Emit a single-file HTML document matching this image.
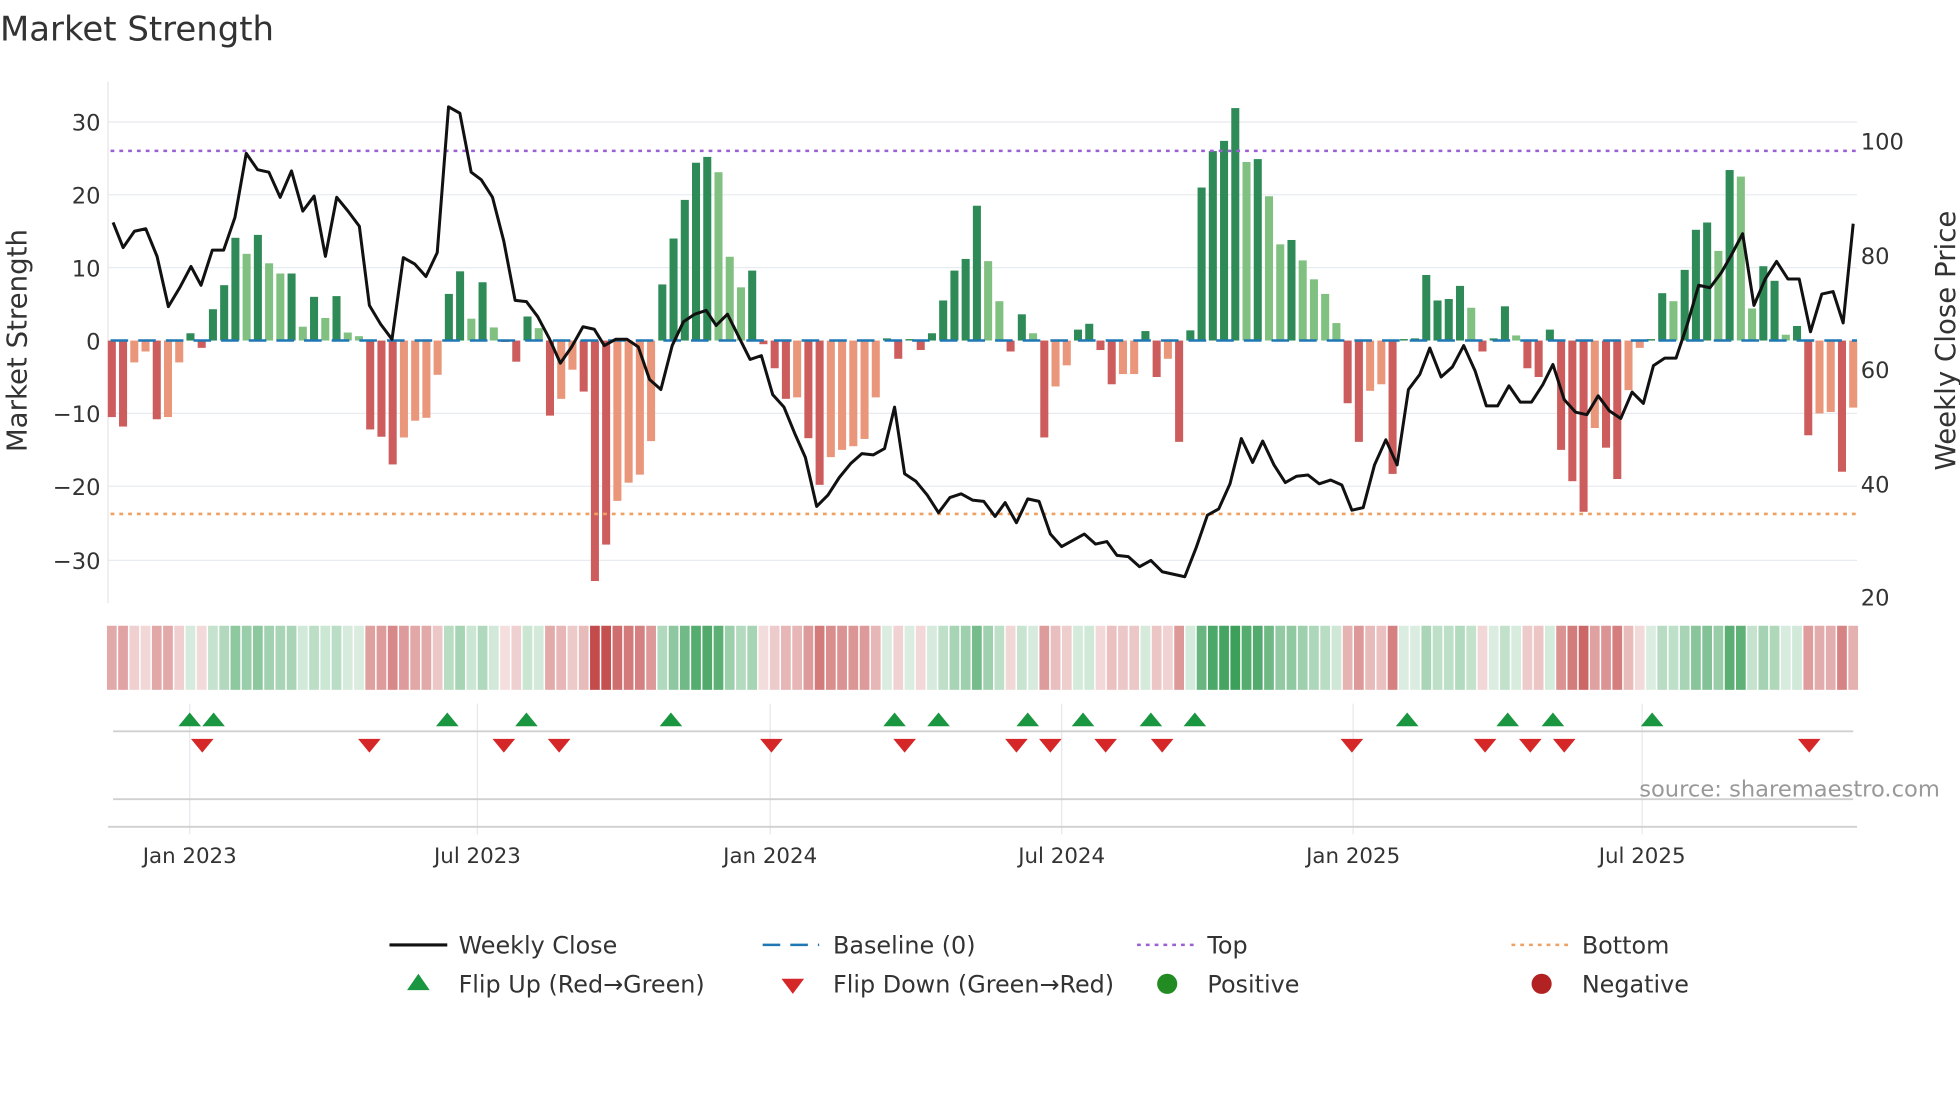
<!DOCTYPE html>
<html><head><meta charset="utf-8"><style>
html,body{margin:0;padding:0;background:#fff;overflow:hidden}
svg{display:block}
text{font-family:"DejaVu Sans","Liberation Sans",sans-serif}
</style></head><body>
<svg id="s" width="1960" height="1102" viewBox="0 0 1560 877" xmlns="http://www.w3.org/2000/svg">
<rect width="1560" height="877" fill="#fff"/>
<text x="0" y="32" font-size="27" fill="#333">Market Strength</text>
<g id="grid" stroke="#e8ebf0" stroke-width="1">
<line x1="86" x2="1478" y1="97" y2="97"/><line x1="86" x2="1478" y1="155" y2="155"/><line x1="86" x2="1478" y1="213" y2="213"/>
<line x1="86" x2="1478" y1="329" y2="329"/><line x1="86" x2="1478" y1="387" y2="387"/><line x1="86" x2="1478" y1="446" y2="446"/>
</g>
<line x1="86" x2="86" y1="65" y2="480" stroke="#e6e6e6"/>
<g font-size="18" fill="#333" text-anchor="end">
<text x="80" y="104">30</text><text x="80" y="162">20</text><text x="80" y="220">10</text><text x="80" y="278">0</text>
<text x="80" y="336">−10</text><text x="80" y="394">−20</text><text x="80" y="453">−30</text>
</g>
<g font-size="18" fill="#333">
<text x="1481" y="119">100</text><text x="1481" y="210">80</text><text x="1481" y="301">60</text><text x="1481" y="392">40</text><text x="1481" y="482">20</text>
</g>
<text transform="translate(21,271) rotate(-90)" font-size="22" fill="#333" text-anchor="middle">Market Strength</text>
<text transform="translate(1556,271) rotate(-90)" font-size="22" fill="#333" text-anchor="middle">Weekly Close Price</text>
<g id="bars"></g>
<line x1="88" x2="1478" y1="271" y2="271" stroke="#1f77b4" stroke-width="2" stroke-dasharray="14,8"/>
<line x1="88" x2="1478" y1="120" y2="120" stroke="#9b5fd6" stroke-width="2" stroke-dasharray="3,4"/>
<line x1="88" x2="1478" y1="409" y2="409" stroke="#f0a060" stroke-width="2" stroke-dasharray="3,4"/>
<polyline id="price" fill="none" stroke="#111" stroke-width="2.4" stroke-linejoin="round"/>
<g id="heat"></g>
<g id="vgrid" stroke="#e6e8ec"></g>
<line x1="90" x2="1475" y1="582" y2="582" stroke="#d0d0d0" stroke-width="1.5"/>
<line x1="90" x2="1475" y1="636" y2="636" stroke="#d0d0d0" stroke-width="1.5"/>
<line x1="86" x2="1478" y1="658" y2="658" stroke="#d0d0d0" stroke-width="1.5"/>
<g id="tri"></g>
<text x="1544" y="634" font-size="18" fill="#999" text-anchor="end">source: sharemaestro.com</text>
<g font-size="17" fill="#333" text-anchor="middle">
<text x="151" y="687">Jan 2023</text><text x="380" y="687">Jul 2023</text><text x="613" y="687">Jan 2024</text>
<text x="845" y="687">Jul 2024</text><text x="1077" y="687">Jan 2025</text><text x="1307" y="687">Jul 2025</text>
</g>
<g font-size="19" fill="#333">
<line x1="310" x2="356" y1="752" y2="752" stroke="#111" stroke-width="2.5"/><text x="365" y="759">Weekly Close</text>
<line x1="607" x2="652" y1="752" y2="752" stroke="#1f77b4" stroke-width="2" stroke-dasharray="14,8"/><text x="663" y="759">Baseline (0)</text>
<line x1="905" x2="950" y1="752" y2="752" stroke="#9b5fd6" stroke-width="2" stroke-dasharray="3,4"/><text x="961" y="759">Top</text>
<line x1="1203" x2="1248" y1="752" y2="752" stroke="#f0a060" stroke-width="2" stroke-dasharray="3,4"/><text x="1259" y="759">Bottom</text>
<polygon points="324,788 342,788 333,775" fill="#1a9641"/><text x="365" y="790">Flip Up (Red→Green)</text>
<polygon points="622,779 640,779 631,791" fill="#d62728"/><text x="663" y="790">Flip Down (Green→Red)</text>
<circle cx="929" cy="783" r="8" fill="#228b22"/><text x="961" y="790">Positive</text>
<circle cx="1227" cy="783" r="8" fill="#b22222"/><text x="1259" y="790">Negative</text>
</g>
</svg>
<script>
var NS="http://www.w3.org/2000/svg";
function el(t,a,p){var e=document.createElementNS(NS,t);for(var k in a)e.setAttribute(k,a[k]);document.getElementById(p).appendChild(e);return e;}
// value, dark(1)/light(0)
var V=[[-10.5,1],[-11.8,1],[-3,0],[-1.5,0],[-10.8,1],[-10.5,0],[-3,0],[1,1],[-1,1],[4.3,1],[7.6,1],[14.1,1],[11.9,0],[14.5,1],[10.6,0],[9.2,0],[9.2,1],[1.9,0],[6,1],[3.1,0],[6.1,1],[1.1,0],[0.6,0],
[-12.2,1],[-13.2,1],[-17,1],[-13.3,0],[-11,0],[-10.6,0],[-4.7,0],[6.4,1],[9.5,1],[3,0],[8,1],[1.8,0],[-0.2,1],[-2.9,1],[3.3,1],[1.7,0],
[-10.3,1],[-8,0],[-4,0],[-7,1],[-33,1],[-28,1],[-22,0],[-19.5,0],[-18.4,0],[-13.8,0],[7.7,1],[14,1],[19.3,1],[24.4,1],[25.2,1],[23.1,0],[11.5,0],[7.3,0],[9.6,1],
[-0.5,1],[-3.8,1],[-8,1],[-7.8,0],[-13.4,1],[-19.8,1],[-16,0],[-15,0],[-14.5,0],[-13.5,0],[-7.8,0],[0.3,1],[-2.5,1],[0.2,1],[-1.3,1],[1,1],[5.5,1],[9.6,1],[11.2,1],[18.5,1],[10.9,0],[5.4,0],
[-1.5,1],[3.6,1],[1,0],[-13.3,1],[-6.3,0],[-3.4,0],[1.5,1],[2.3,1],[-1.3,1],[-6,1],[-4.6,0],[-4.6,0],[1.3,1],[-5,1],[-2.5,0],[-13.9,1],[1.4,1],[21,1],[26,1],[27.4,1],[31.9,1],[24.5,0],[24.9,1],[19.8,0],[13.2,0],[13.8,1],[11,0],[8.4,0],[6.4,0],[2.4,0],
[-8.6,1],[-13.9,1],[-6.9,0],[-6,0],[-18.3,1],[0.2,1],[0.3,1],[9,1],[5.5,1],[5.7,1],[7.5,1],[4.5,0],[-1.5,1],[0.3,1],[4.7,1],[0.7,0],[-3.8,1],[-5,1],[1.5,1],[-15,1],[-19.3,1],[-23.5,1],[-12,0],[-14.7,1],[-19,1],[-6.8,0],[-1,0],[0.2,1],
[6.5,1],[5.4,0],[9.7,1],[15.2,1],[16.2,1],[12.3,0],[23.4,1],[22.5,0],[4.4,0],[10.2,1],[8.2,1],[0.8,0],[2,1],[-13,1],[-10,0],[-9.8,0],[-18,1],[-9.2,0]];
var n=V.length,x0=89,x1=1475,st=(x1-x0)/(n-1);
V.forEach(function(d,i){var v=d[0],x=x0+i*st,y0=271,h=Math.abs(v)*5.8;
 var c=v>=0?(d[1]?"#2e8b57":"#80c080"):(d[1]?"#cd5c5c":"#e9967a");
 el("rect",{x:x-3.2,y:v>=0?y0-h:y0,width:6.4,height:Math.max(h,0.5),fill:c},"bars");
 var a=Math.min(1,0.18+0.85*Math.abs(v)/30);
 var base=v>=0?[60,160,90]:[195,75,75];
 var col="rgb("+base.map(function(b){return Math.round(255-(255-b)*a)}).join(",")+")";
 el("rect",{x:x-st/2+0.6,y:498,width:st-1.2,height:51,fill:col},"heat");
});
var P="90,177 98,197 107,184 116,182 125,204 134,244 143,229 152,212 160,227 169,199 178,199 187,173 196,122 205,135 214,137 223,157 232,136 241,168 250,156 259,204 268,157 277,168 286,180 294,243 303,258 312,270 321,205 330,210 339,220 348,201 357,85 366,90 375,137 383,143 392,157 401,192 410,239 419,240 428,252 437,269 446,289 455,276 464,260 473,262 481,275 490,270 499,270 508,276 517,302 526,310 535,275 544,256 553,250 562,247 570,259 579,250 588,268 597,286 606,283 615,314 624,324 633,346 641,364 650,403 659,394 668,380 677,369 686,361 695,362 704,357 712,324 720,377 729,383 738,394 747,408 756,396 765,393 774,398 783,399 792,411 800,400 809,416 818,397 827,399 836,425 845,435 854,430 863,425 872,433 881,431 889,442 898,443 907,451 916,446 925,455 934,457 943,459 952,436 961,410 970,405 979,385 988,349 997,368 1005,351 1014,370 1023,384 1032,379 1041,378 1050,385 1059,382 1068,386 1076,406 1085,404 1094,370 1103,350 1112,370 1121,310 1130,298 1138,277 1147,300 1156,292 1165,275 1174,295 1183,323 1192,323 1201,307 1210,320 1219,320 1228,306 1236,290 1245,318 1254,328 1263,330 1272,315 1281,327 1290,333 1299,312 1308,321 1316,291 1325,285 1334,285 1343,258 1352,227 1361,229 1370,217 1378,203 1387,186 1396,243 1405,222 1414,208 1423,222 1432,222 1441,264 1450,234 1459,232 1467,257 1475,178";
document.getElementById("price").setAttribute("points",P);
[151,380,613,845,1077,1307].forEach(function(x){el("line",{x1:x,x2:x,y1:560,y2:664},"vgrid");});
[151,170,356,419,534,712,747,818,862,916,951,1120,1200,1236,1315].forEach(function(x){el("polygon",{points:(x-9)+",578 "+(x+9)+",578 "+x+",567",fill:"#1a9641"},"tri");});
[161,294,401,445,614,720,809,836,880,925,1076,1182,1218,1245,1440].forEach(function(x){el("polygon",{points:(x-9)+",588 "+(x+9)+",588 "+x+",599",fill:"#d62728"},"tri");});
</script>
</body></html>
